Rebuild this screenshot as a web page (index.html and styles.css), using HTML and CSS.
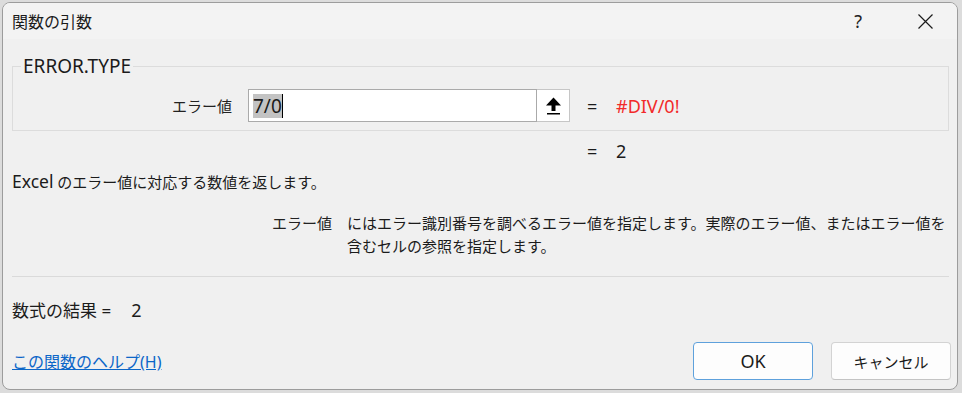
FILE: index.html
```html
<!DOCTYPE html>
<html lang="ja">
<head>
    <meta charset="UTF-8">
    <title>関数の引数</title>
    <link rel="stylesheet" href="styles.css">
</head>
<body>

<div class="dialog">
    <div class="titlebar">
        <span class="title">関数の引数</span>
        <span class="help">?</span>
        <svg class="close" width="15" height="15" viewBox="0 0 15 15">
            <path d="M0.5 0.5L14.5 14.5M14.5 0.5L0.5 14.5" stroke="#1b1b1b" stroke-width="1.2" fill="none"/>
        </svg>
    </div>

    <div class="content">
        <fieldset class="args">
            <legend>ERROR.TYPE</legend>
            <div class="arg-row">
                <label class="arg-label">エラー値</label>
                <div class="ref-field">
                    <span class="sel">7/0</span><span class="caret"></span>
                </div>
                <button class="ref-btn">
                    <svg width="17" height="18" viewBox="0 0 17 18">
                        <path d="M8.5 0.5L16 8.5H10.5V14H6.5V8.5H1Z" fill="#000"/>
                        <rect x="2" y="16" width="13" height="1.5" fill="#000"/>
                    </svg>
                </button>
                <span class="eq">=</span>
                <span class="val error">#DIV/0!</span>
            </div>
        </fieldset>

        <div class="func-result">
            <span class="eq">=</span>
            <span class="val">2</span>
        </div>

        <p class="summary"><span class="app">Excel</span> のエラー値に対応する数値を返します。</p>

        <div class="arg-help">
            <span class="arg-name">エラー値</span>
            <p>にはエラー識別番号を調べるエラー値を指定します。実際のエラー値、またはエラー値を含むセルの参照を指定します。</p>
        </div>

        <hr class="sep">

        <div class="formula-result">数式の結果 =<span class="result-val">2</span></div>

        <div class="footer">
            <a href="#" class="help-link">この関数のヘルプ(H)</a>
            <div class="buttons">
                <button class="btn primary">OK</button>
                <button class="btn">キャンセル</button>
            </div>
        </div>
    </div>
</div>

</body>
</html>
```

FILE: styles.css
```css
body {
    margin: 0;
    background: #dcdcdc;
    font-family: "Noto Sans", "Noto Sans CJK JP", sans-serif;
    color: #1b1b1b;
}
.dialog {
    margin: 2px 4px 3px 2px;
    height: 388px;
    box-sizing: border-box;
    border: 1px solid #9c9c9c;
    border-radius: 8px;
    background: #f0f0f0;
    overflow: hidden;
    display: flex;
    flex-direction: column;
}
.titlebar {
    height: 36px;
    display: flex;
    align-items: center;
    padding: 0 24px 0 9px;
    background: #f3f3f3;
}
.title {
    flex: 1;
    font-size: 16px;
}
.help {
    font-size: 18px;
    color: #222;
    margin-right: 56px;
}
.content {
    flex: 1;
    display: flex;
    flex-direction: column;
    padding: 0 6px 0 9px;
}

/* argument group */
.args {
    margin: 16px 2px 0 0;
    padding: 12px 0 8px 8px;
    border: 1px solid #dcdcdc;
    min-width: 0;
}
.args legend {
    font-size: 19px;
    line-height: 22px;
    padding: 0 2px;
}
.arg-row {
    display: flex;
    align-items: center;
    height: 33px;
}
.arg-label {
    width: 211px;
    margin-right: 16px;
    text-align: right;
    font-size: 15px;
    color: #222;
}
.ref-field {
    width: 289px;
    height: 33px;
    box-sizing: border-box;
    border: 1px solid #aaa;
    background: #fff;
    display: flex;
    align-items: center;
    padding-left: 4px;
}
.sel {
    background: #c3c3c3;
    font-size: 19px;
    line-height: 24px;
}
.caret {
    width: 1px;
    height: 24px;
    background: #000;
}
.ref-btn {
    width: 33px;
    height: 33px;
    box-sizing: border-box;
    border: 1px solid #c6c6c6;
    border-left: none;
    background: #fff;
    padding: 0;
    display: flex;
    align-items: center;
    justify-content: center;
}
.eq {
    width: 29px;
    margin-left: 17px;
    font-size: 18px;
}
.val {
    font-size: 18px;
}
.error {
    color: #f22a2a;
}

.func-result {
    display: flex;
    align-items: center;
    height: 22px;
    margin-top: 9px;
    padding-left: 558px;
}
.summary {
    margin: 8px 0 0;
    font-size: 15px;
    line-height: 22px;
}
.app {
    font-size: 17.5px;
}
.arg-help {
    display: grid;
    grid-template-columns: 320px 1fr;
    column-gap: 15px;
    margin-top: 19px;
    font-size: 15px;
    line-height: 23px;
}
.arg-name {
    text-align: right;
    color: #222;
}
.arg-help p {
    margin: 0;
}
.sep {
    border: 0;
    border-top: 1px solid #dadada;
    margin: 18px 2px 0 0;
}
.formula-result {
    margin-top: 22px;
    font-size: 17px;
    line-height: 22px;
}
.result-val {
    margin-left: 20px;
    font-size: 18px;
}

.footer {
    margin-top: 20px;
    display: flex;
    justify-content: space-between;
    align-items: center;
    height: 38px;
}
.help-link {
    font-size: 16px;
    color: #0b66c8;
    text-decoration: underline;
}
.buttons {
    display: flex;
    gap: 18px;
}
.btn {
    width: 120px;
    height: 38px;
    border: 1px solid #d3d3d3;
    border-bottom-color: #c4c4c4;
    border-radius: 4px;
    background: #fdfdfd;
    font-family: "Noto Sans", "Noto Sans CJK JP", sans-serif;
    font-size: 15px;
    color: #1b1b1b;
}
.primary {
    border-color: #5ea1dc;
    font-size: 18px;
}
```
